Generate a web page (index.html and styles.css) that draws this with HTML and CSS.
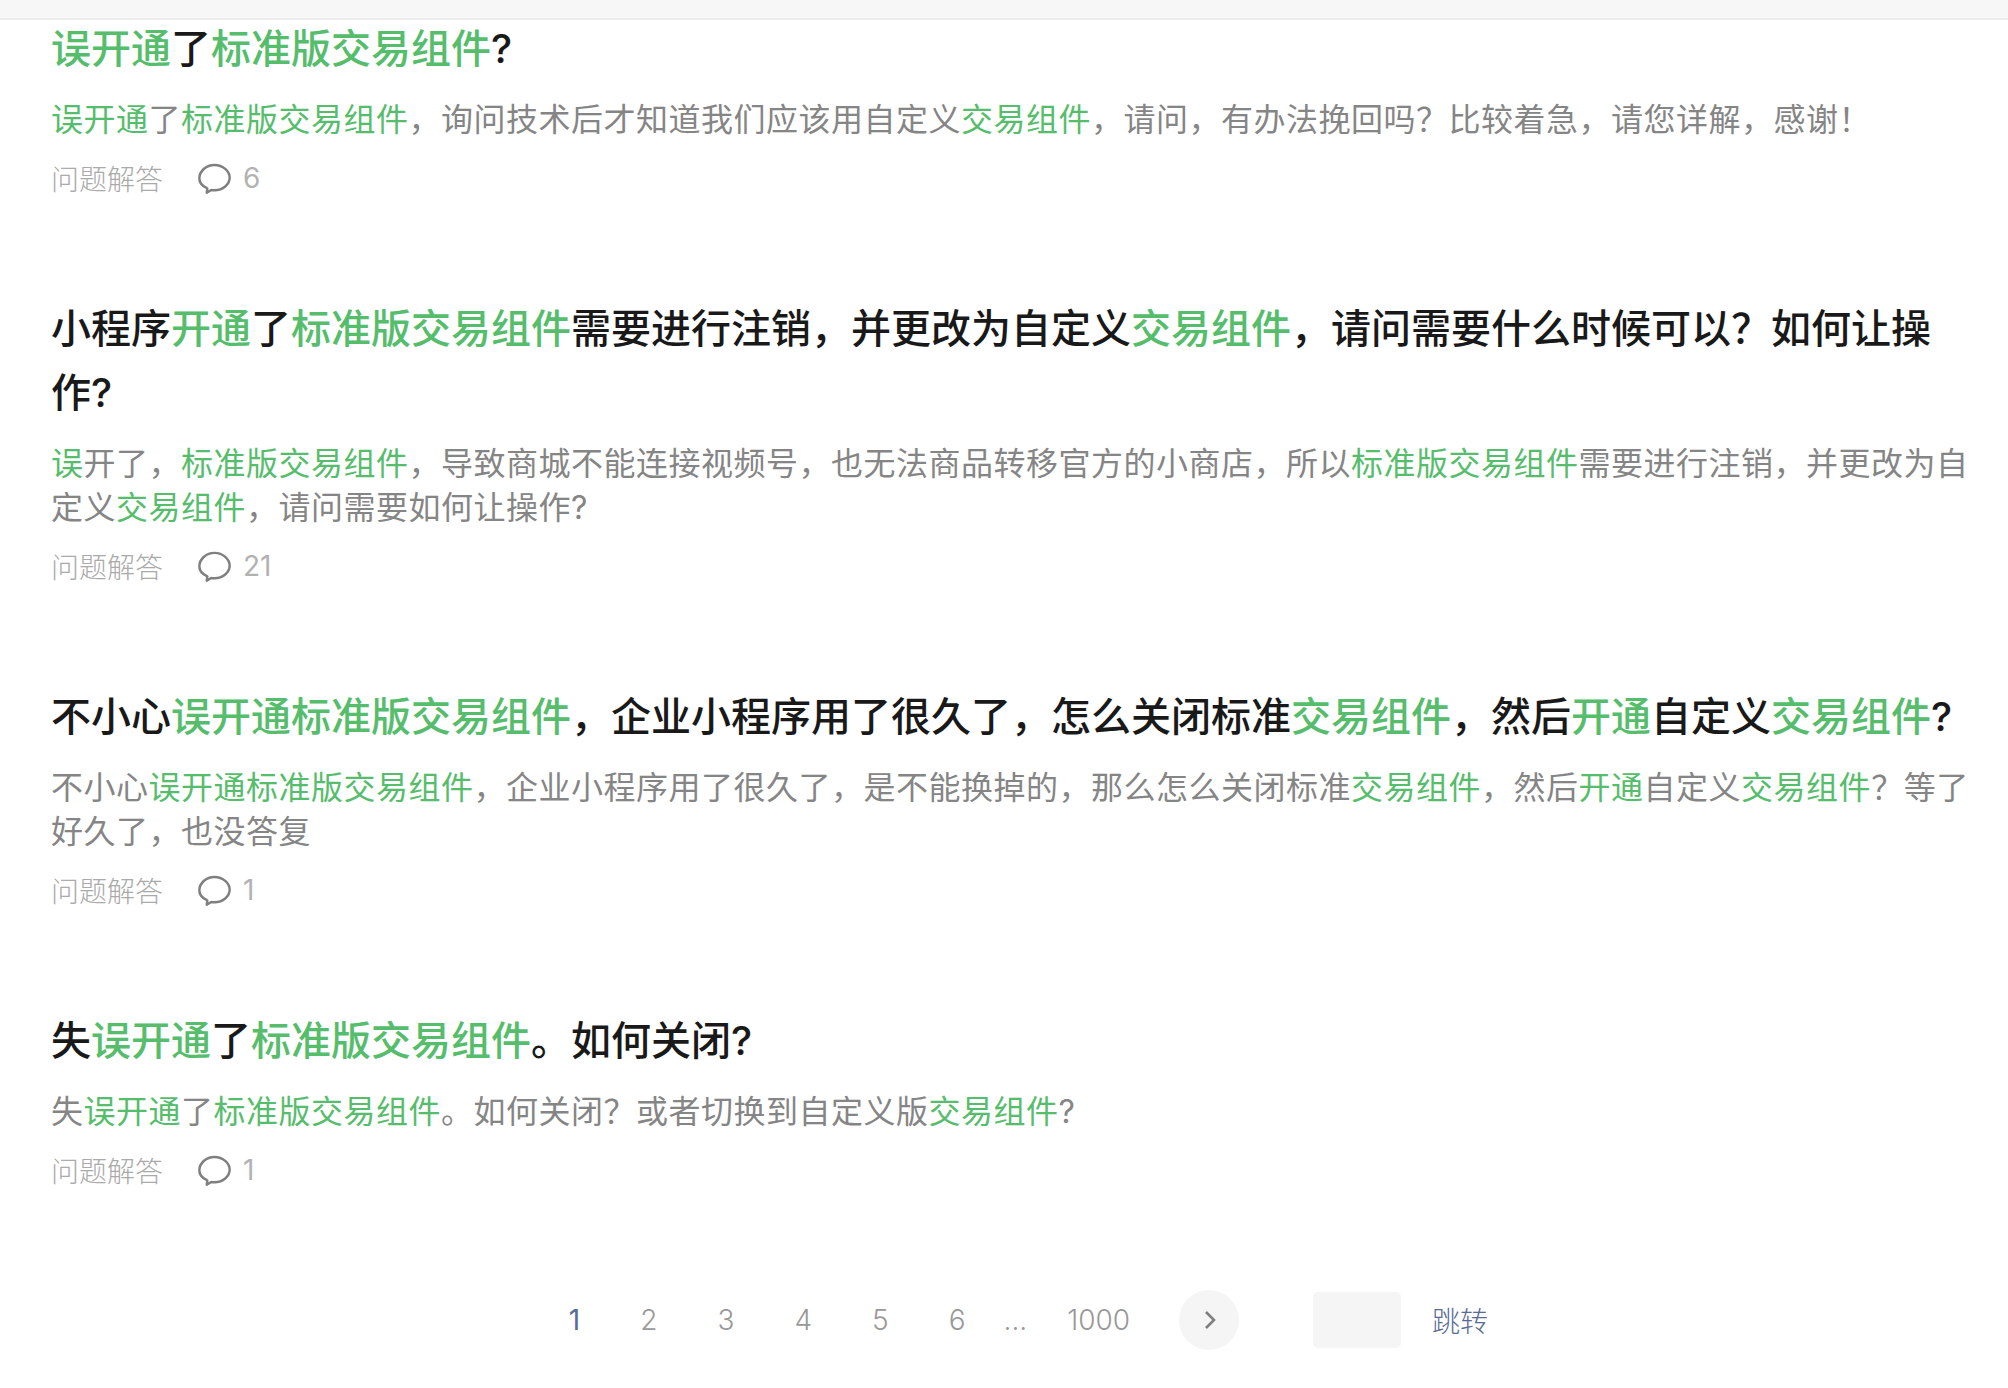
FILE: index.html
```html
<!DOCTYPE html>
<html lang="zh-CN">
<head>
<meta charset="utf-8">
<title>搜索结果</title>
<link rel="stylesheet" href="styles.css">
</head>
<body>
<svg class="sprite" width="0" height="0" aria-hidden="true"><defs><symbol id="bubble" viewBox="0 0 32 30"><path d="M8.500 28.700 9 24.500C4.400 22.600 1.300 19 1.300 14.800 1.300 8 7.800 1.800 16 1.800S30.700 8 30.700 14.300 24.200 26.400 16 26.400c-1.100 0-2.100-.1-3.100-.3z" fill="none" stroke="currentColor" stroke-width="2.400" stroke-linejoin="round"/></symbol></defs></svg>
<header class="topbar"></header>
<main class="results">
  <article class="item">
    <h2 class="title"><em>误开通</em>了<em>标准版交易组件</em>?</h2>
    <p class="desc"><em>误开通</em>了<em>标准版交易组件</em>，询问技术后才知道我们应该用自定义<em>交易组件</em>，请问，有办法挽回吗？比较着急，请您详解，感谢！</p>
    <div class="meta"><span class="tag">问题解答</span><span class="count"><svg class="bubble"><use href="#bubble"/></svg>6</span></div>
  </article>
  <article class="item">
    <h2 class="title">小程序<em>开通</em>了<em>标准版交易组件</em>需要进行注销，并更改为自定义<em>交易组件</em>，请问需要什么时候可以？如何让操作?</h2>
    <p class="desc"><em>误</em>开了，<em>标准版交易组件</em>，导致商城不能连接视频号，也无法商品转移官方的小商店，所以<em>标准版交易组件</em>需要进行注销，并更改为自定义<em>交易组件</em>，请问需要如何让操作?</p>
    <div class="meta"><span class="tag">问题解答</span><span class="count"><svg class="bubble"><use href="#bubble"/></svg>21</span></div>
  </article>
  <article class="item">
    <h2 class="title">不小心<em>误开通标准版交易组件</em>，企业小程序用了很久了，怎么关闭标准<em>交易组件</em>，然后<em>开通</em>自定义<em>交易组件</em>?</h2>
    <p class="desc">不小心<em>误开通标准版交易组件</em>，企业小程序用了很久了，是不能换掉的，那么怎么关闭标准<em>交易组件</em>，然后<em>开通</em>自定义<em>交易组件</em>？等了好久了，也没答复</p>
    <div class="meta"><span class="tag">问题解答</span><span class="count"><svg class="bubble"><use href="#bubble"/></svg>1</span></div>
  </article>
  <article class="item">
    <h2 class="title">失<em>误开通</em>了<em>标准版交易组件</em>。如何关闭?</h2>
    <p class="desc">失<em>误开通</em>了<em>标准版交易组件</em>。如何关闭？或者切换到自定义版<em>交易组件</em>?</p>
    <div class="meta"><span class="tag">问题解答</span><span class="count"><svg class="bubble"><use href="#bubble"/></svg>1</span></div>
  </article>
</main>
<nav class="pager">
  <a class="page current">1</a>
  <a class="page">2</a>
  <a class="page">3</a>
  <a class="page">4</a>
  <a class="page">5</a>
  <a class="page">6</a>
  <span class="dots">...</span>
  <a class="page last">1000</a>
  <button class="next" aria-label="下一页"><svg class="chevron" width="14" height="22" viewBox="0 0 14 22"><path d="M3 3l8 8-8 8" fill="none" stroke="currentColor" stroke-width="2.600"/></svg></button>
  <span class="jump-input"></span>
  <a class="jump">跳转</a>
</nav>
</body>
</html>
```
FILE: styles.css
```css
* { box-sizing: border-box; }
html, body { margin: 0; padding: 0; }
body {
  width: 2008px;
  height: 1388px;
  overflow: hidden;
  background: #fff;
  font-family: Inter, "Noto Sans CJK SC", "Liberation Sans", sans-serif;
}
.sprite { position: absolute; }
em { font-style: normal; color: #56bd6c; }
.topbar {
  height: 20px;
  background: #f7f7f7;
  border-bottom: 2px solid #ededed;
}
.results {
  width: 1920px;
  margin: -3px 0 0 51px;
}
.item { padding-bottom: 99px; }
.title {
  margin: 0;
  font-size: 40px;
  line-height: 64px;
  font-weight: 500;
  color: #191919;
}
.desc {
  margin: 17px 0 0;
  font-size: 32px;
  line-height: 44px;
  letter-spacing: 0.5px;
  font-weight: 400;
  color: #858585;
}
.meta {
  display: flex;
  align-items: center;
  margin-top: 16px;
  height: 40px;
  font-size: 28px;
  font-weight: 300;
  color: #aaa;
}
.count {
  display: flex;
  align-items: center;
  margin-left: 35px;
  font-weight: 400;
  color: #b2b2b2;
}
.bubble {
  width: 33px;
  height: 31px;
  margin-right: 12px;
  color: #7f7f7f;
}
.pager {
  display: flex;
  align-items: center;
  justify-content: center;
  height: 60px;
  margin-top: 1px;
  padding-left: 19px;
  font-size: 28px;
  font-weight: 300;
  color: #999;
}
.page { padding: 0 30px; }
.current { color: #576b95; font-weight: 400; }
.dots { padding: 0 10px 0 8px; }
.next {
  display: flex;
  align-items: center;
  justify-content: center;
  width: 60px;
  height: 60px;
  margin: 0 0 0 19px;
  padding: 0 0 0 2px;
  border: 0;
  border-radius: 50%;
  background: #f5f5f5;
  color: #7f7f7f;
}
.jump-input {
  width: 88px;
  height: 56px;
  margin-left: 74px;
  border-radius: 5px;
  background: #f5f5f5;
}
.jump {
  margin-left: 31px;
  color: #576b95;
}
```
